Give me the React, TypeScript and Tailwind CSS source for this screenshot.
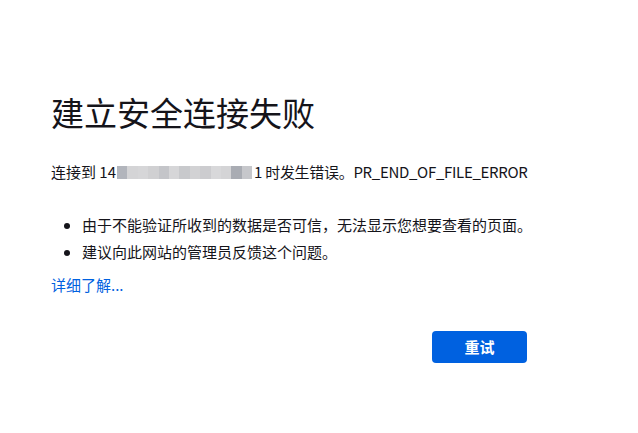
import React from "react";

const blocks = [
  "#b2b5bc", "#d4d4d6", "#d6d6d8", "#d0d0d2", "#c4c5c9", "#d6d6d8", "#c8c9cc", "#d2d2d4", "#cccccf", "#d8d8da", "#d4d4d6", "#a9acb3", "#c6c7cb",
];

export default function App() {
  return (
    <div
      className="w-[638px] h-[433px] bg-white text-[#15141a]"
      style={{ fontFamily: '"Microsoft YaHei", "Noto Sans CJK SC", "Noto Sans", sans-serif' }}
    >
      <div className="w-[476px] ml-[51px] pt-[88px]">
        <h1 className="text-[33px] leading-[48px] font-normal tracking-[0px]">建立安全连接失败</h1>
        <p className="mt-[24px] text-[15px] leading-[24px] flex items-center whitespace-nowrap">
          <span>连接到 14</span>
          <span className="flex h-[13px] ml-[1px]">
            {blocks.map((c, i) => (
              <span key={i} className="w-[10.4px] h-[13px] inline-block" style={{ backgroundColor: c }} />
            ))}
          </span>
          <span className="ml-[2px] tracking-[-0.3px]">1 时发生错误。PR_END_OF_FILE_ERROR</span>
        </p>
        <ul className="mt-[27px] pl-[31px] list-disc text-[15px] leading-[27px] whitespace-nowrap tracking-[0px]">
          <li>由于不能验证所收到的数据是否可信，无法显示您想要查看的页面。</li>
          <li>建议向此网站的管理员反馈这个问题。</li>
        </ul>
        <a className="block mt-[8px] text-[15px] leading-[24px] text-[#0061e0]">详细了解...</a>
        <div className="flex justify-end mt-[34px]">
          <button className="w-[95px] h-[32px] rounded-[4px] bg-[#0061e0] text-white text-[15px] font-bold">
            重试
          </button>
        </div>
      </div>
    </div>
  );
}
